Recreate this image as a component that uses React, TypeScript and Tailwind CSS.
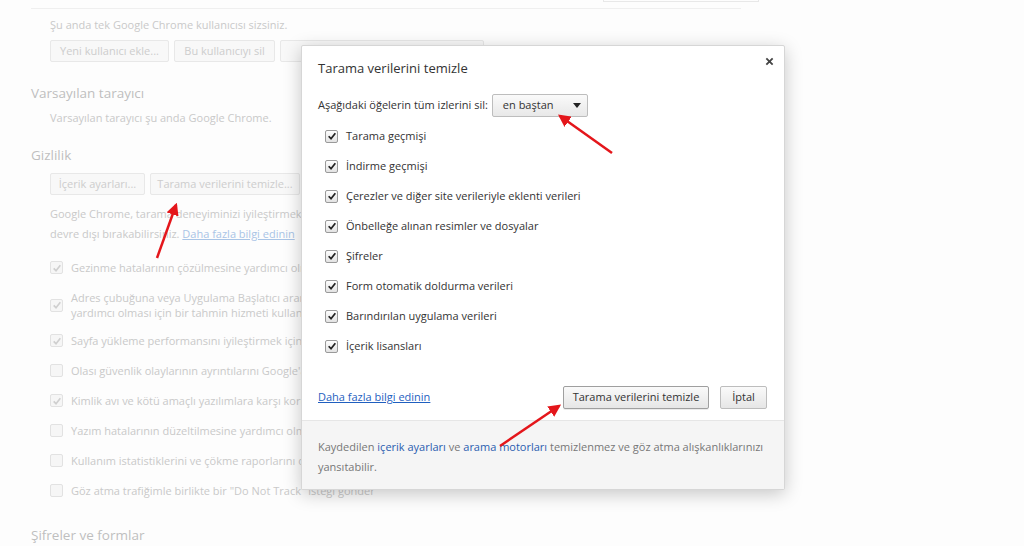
import React from 'react';

const font = { fontFamily: '"Open Sans", "Noto Sans", sans-serif' };

function FadedCheck({ checked }: { checked: boolean }) {
  return (
    <span className="flex h-[13px] w-[13px] shrink-0 items-center justify-center rounded-[2px] border border-[#e2e2e2] bg-[#f6f6f6]">
      {checked && (
        <svg viewBox="0 0 12 12" className="h-[10px] w-[10px]">
          <path d="M2 6.5 L4.8 9.2 L10 2.8" fill="none" stroke="#cfcfcf" strokeWidth="2" />
        </svg>
      )}
    </span>
  );
}

function Check() {
  return (
    <span className="flex h-[13px] w-[13px] shrink-0 items-center justify-center rounded-[2px] border border-[#9a9a9a] bg-gradient-to-b from-[#fdfdfd] to-[#e3e3e3]">
      <svg viewBox="0 0 12 12" className="h-[10px] w-[10px]">
        <path d="M2 6.3 L4.8 9.2 L10 2.6" fill="none" stroke="#222" strokeWidth="2.1" />
      </svg>
    </span>
  );
}

const privacyRows: { label: string[]; checked: boolean }[] = [
  { label: ['Gezinme hatalarının çözülmesine yardımcı olmak için bir web hizmeti kullan'], checked: true },
  {
    label: [
      'Adres çubuğuna veya Uygulama Başlatıcı arama kutusuna yazılan aramaları ve URL\'leri tamamlamaya',
      'yardımcı olması için bir tahmin hizmeti kullan',
    ],
    checked: true,
  },
  { label: ['Sayfa yükleme performansını iyileştirmek için ağ işlemlerini tahmin et'], checked: true },
  { label: ['Olası güvenlik olaylarının ayrıntılarını Google\'a otomatik olarak bildir'], checked: false },
  { label: ['Kimlik avı ve kötü amaçlı yazılımlara karşı korumayı etkinleştir'], checked: true },
  { label: ['Yazım hatalarının düzeltilmesine yardımcı olmak için bir web hizmeti kullan'], checked: false },
  { label: ['Kullanım istatistiklerini ve çökme raporlarını otomatik olarak Google\'a gönder'], checked: false },
  { label: ['Göz atma trafiğimle birlikte bir "Do Not Track" isteği gönder'], checked: false },
];

const clearItems = [
  'Tarama geçmişi',
  'İndirme geçmişi',
  'Çerezler ve diğer site verileriyle eklenti verileri',
  'Önbelleğe alınan resimler ve dosyalar',
  'Şifreler',
  'Form otomatik doldurma verileri',
  'Barındırılan uygulama verileri',
  'İçerik lisansları',
];

function FadedButton({ children, w }: { children: React.ReactNode; w: string }) {
  return (
    <div className={`flex h-[22px] items-center justify-center rounded-[2px] border border-[#e8e8e8] bg-[#f8f8f8] text-[#cdcdcd] ${w}`}>
      {children}
    </div>
  );
}

export default function App() {
  return (
    <div className="relative h-[546px] w-[1024px] overflow-hidden bg-[#fdfdfd] text-[11px]" style={font}>
      {/* faded settings page behind the dialog */}
      <div className="pl-[31px] text-[#c9c9c9]">
        <div className="flex h-[9px] w-[710px] justify-end border-b border-[#efefef]">
          <div className="mr-[-18px] h-[2px] w-[156px] border-x border-b border-[#e8e8e8]" />
        </div>
        <div className="pl-[19px]">
          <div className="mt-[7px] leading-[18px]">Şu anda tek Google Chrome kullanıcısı sizsiniz.</div>
          <div className="mt-[6px] flex gap-[5px]">
            <FadedButton w="w-[119px]">Yeni kullanıcı ekle...</FadedButton>
            <FadedButton w="w-[101px]">Bu kullanıcıyı sil</FadedButton>
            <FadedButton w="w-[204px]">Yeni kullanıcıları içe aktar...</FadedButton>
          </div>
        </div>
        <div className="mt-[21px] text-[13.5px] leading-[20px] text-[#bfbfbf]">Varsayılan tarayıcı</div>
        <div className="mt-[6px] pl-[19px] leading-[18px]">Varsayılan tarayıcı şu anda Google Chrome.</div>
        <div className="mt-[18px] text-[13.5px] leading-[20px] text-[#bfbfbf]">Gizlilik</div>
        <div className="pl-[19px]">
          <div className="mt-[8px] flex gap-[5px]">
            <FadedButton w="w-[95px]">İçerik ayarları...</FadedButton>
            <FadedButton w="w-[150px]">Tarama verilerini temizle...</FadedButton>
          </div>
          <div className="mt-[9px] whitespace-nowrap leading-[20px]">
            Google Chrome, tarama deneyiminizi iyileştirmek için web hizmetlerini kullanabilir. Bu hizmetleri isteğe bağlı olarak
            <br />
            devre dışı bırakabilirsiniz. <span className="text-[#a9c4e6] underline">Daha fazla bilgi edinin</span>
          </div>
          <div className="mt-[16px] flex flex-col gap-[15px]">
            {privacyRows.map((r, i) => (
              <div
                key={i}
                className={`flex items-center gap-[8px] whitespace-nowrap leading-[15px] ${r.label.length > 1 ? '-mb-[2px]' : ''}`}
              >
                <FadedCheck checked={r.checked} />
                <div>
                  {r.label.map((l, j) => (
                    <div key={j}>{l}</div>
                  ))}
                </div>
              </div>
            ))}
          </div>
        </div>
        <div className="mt-[27px] text-[13.5px] leading-[20px] text-[#bfbfbf]">Şifreler ve formlar</div>
      </div>

      {/* dialog */}
      <div className="absolute left-[301px] top-[45px] flex h-[445px] w-[484px] flex-col rounded-[2px] border border-[#d6d6d6] bg-white text-[#333] shadow-[0_4px_18px_rgba(0,0,0,0.22)]">
        <div className="flex items-start justify-between pl-[16px] pr-[10px] pt-[12px]">
          <div className="text-[13px] leading-[20px] text-[#333]">Tarama verilerini temizle</div>
          <svg viewBox="0 0 10 10" className="mt-[-1px] h-[9px] w-[9px]">
            <path d="M1.5 1.5 L8.5 8.5 M8.5 1.5 L1.5 8.5" stroke="#444" strokeWidth="2" />
          </svg>
        </div>
        <div className="mt-[16px] flex items-center gap-[4px] pl-[16px]">
          <span>Aşağıdaki öğelerin tüm izlerini sil:</span>
          <div className="flex h-[23px] w-[96px] items-center justify-between rounded-[2px] border border-[#bdbdbd] bg-gradient-to-b from-[#fafafa] to-[#e8e8e8] pl-[10px] pr-[6px]">
            <span>en baştan</span>
            <svg viewBox="0 0 8 5" className="h-[5px] w-[8px]">
              <path d="M0 0 L8 0 L4 5 Z" fill="#222" />
            </svg>
          </div>
        </div>
        <div className="mt-[4px] flex flex-col pl-[23px]">
          {clearItems.map((it) => (
            <div key={it} className="flex h-[30px] items-center gap-[8px]">
              <Check />
              <span>{it}</span>
            </div>
          ))}
        </div>
        <div className="mt-[25px] flex items-center justify-between pl-[16px] pr-[17px]">
          <span className="text-[#1f5fbf] underline">Daha fazla bilgi edinin</span>
          <div className="flex gap-[11px]">
            <div className="flex h-[23px] w-[146px] items-center justify-center rounded-[2px] border border-[#9f9f9f] bg-gradient-to-b from-[#fafafa] to-[#e6e6e6] shadow-[0_1px_0_rgba(0,0,0,0.08)]">
              Tarama verilerini temizle
            </div>
            <div className="flex h-[23px] w-[47px] items-center justify-center rounded-[2px] border border-[#bdbdbd] bg-gradient-to-b from-[#fafafa] to-[#e6e6e6]">
              İptal
            </div>
          </div>
        </div>
        <div className="mt-auto border-t border-[#e6e6e6] bg-[#f5f5f5] pb-[12px] pl-[16px] pt-[16px] leading-[20px] text-[#777]">
          Kaydedilen <span className="text-[#2a5db0]">içerik ayarları</span> ve{' '}
          <span className="text-[#2a5db0]">arama motorları</span> temizlenmez ve göz atma alışkanlıklarınızı
          <br />
          yansıtabilir.
        </div>
      </div>

      {/* red annotation arrows */}
      <svg className="pointer-events-none absolute inset-0" width="1024" height="546">
        <defs>
          <marker id="head" viewBox="0 0 10 10" refX="8" refY="5" markerWidth="5" markerHeight="5" orient="auto">
            <path d="M0 0 L10 5 L0 10 Z" fill="#e4161b" />
          </marker>
        </defs>
        <line x1="157" y1="258" x2="176" y2="205" stroke="#e4161b" strokeWidth="2.5" markerEnd="url(#head)" />
        <line x1="612" y1="153" x2="560" y2="116" stroke="#e4161b" strokeWidth="2.5" markerEnd="url(#head)" />
        <line x1="500" y1="446" x2="559" y2="406" stroke="#e4161b" strokeWidth="2.5" markerEnd="url(#head)" />
      </svg>
    </div>
  );
}
